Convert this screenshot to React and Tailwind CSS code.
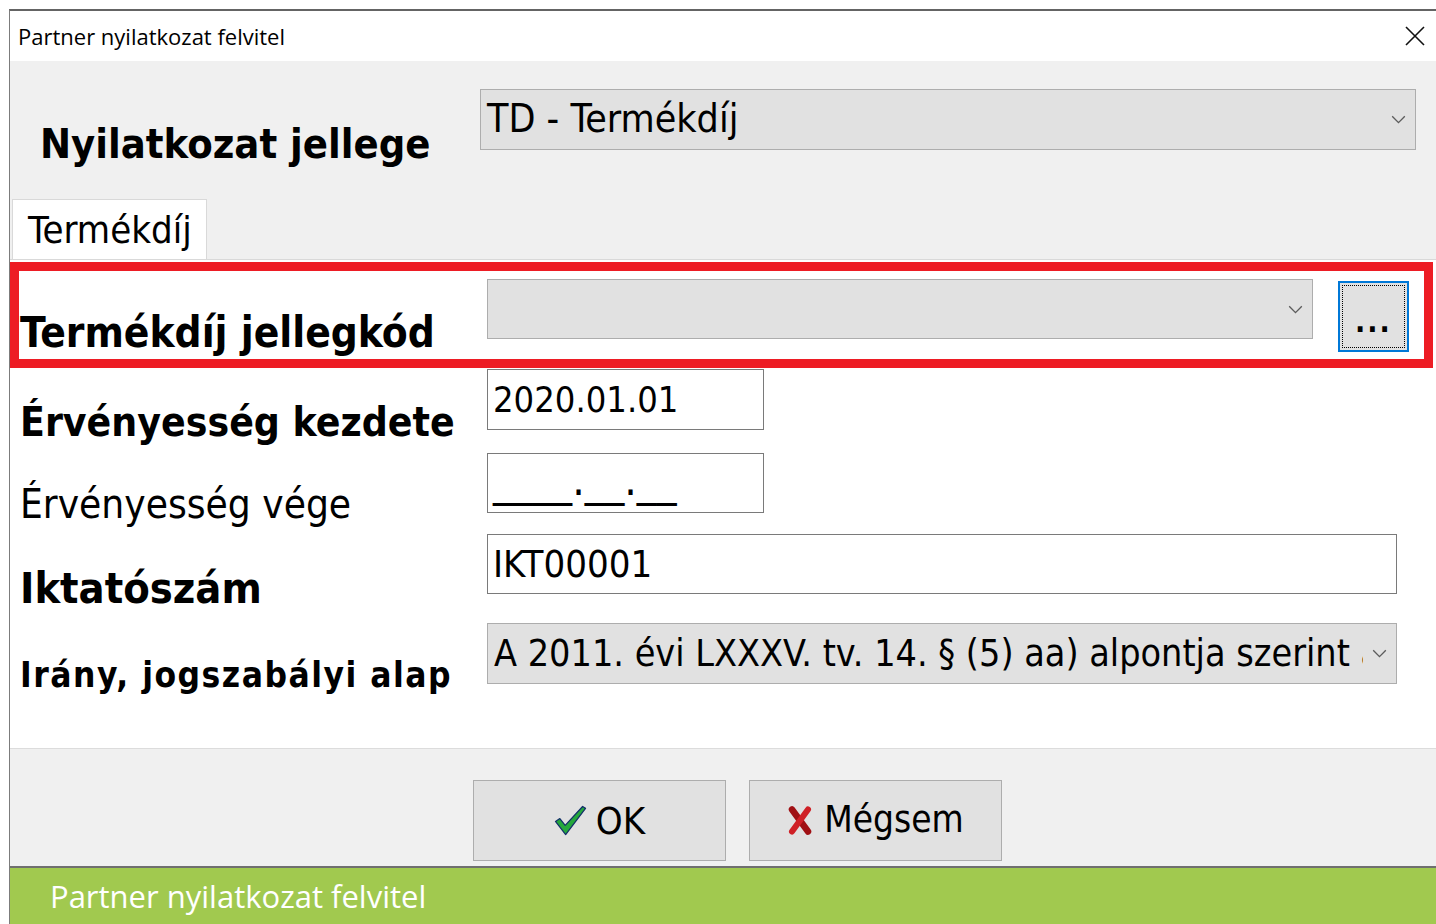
import React from "react";

// Tahoma-like face for the dialog body, Segoe-like for the caption
const DLG = "font-['DejaVu_Sans_Condensed','DejaVu_Sans',sans-serif]";
const CAPTION = "font-['Open_Sans','Noto_Sans',sans-serif]";

function Chevron({ className }) {
  return (
    <svg viewBox="0 0 16 10" className={className} fill="none" stroke="#5c5c5c" strokeWidth="1.5">
      <path d="M1 1.5 L8 8.5 L15 1.5" />
    </svg>
  );
}

function Combo({ value, className, textClass = "" }) {
  return (
    <div className={`flex items-center bg-[#e1e1e1] border border-[#adadad] ${className}`}>
      <span className={`flex-1 min-w-0 overflow-hidden whitespace-nowrap pl-[6px] leading-[1.3] text-black ${DLG} ${textClass}`}>
        {value}
      </span>
      <Chevron className="w-[15px] h-[9px] mx-[9px] shrink-0" />
    </div>
  );
}

function TextBox({ value, className, textClass = "" }) {
  return (
    <div className={`flex items-center bg-white border border-[#7a7a7a] ${className}`}>
      <span className={`pl-[5px] leading-none text-black whitespace-nowrap ${DLG} ${textClass}`}>{value}</span>
    </div>
  );
}

// label sits with its baseline a few px under the field's bottom edge
function Label({ children, bold = true, width = "w-[467px]", size = "text-[42px]", drop = "mb-[-17px]" }) {
  return (
    <div
      className={`${width} ${size} ${drop} shrink-0 leading-none text-black whitespace-nowrap ${DLG} ${
        bold ? "font-bold" : "font-normal"
      }`}
    >
      {children}
    </div>
  );
}

function CheckIcon() {
  return (
    <svg viewBox="0 0 34 32" className="w-[33px] h-[31px]">
      <path
        d="M1.5 17 L6 14 L11.5 21 L29.5 1.5 L32.5 3.5 L12 30.5 Z"
        fill="#25a83c"
        stroke="#14306a"
        strokeWidth="1.3"
        strokeLinejoin="round"
      />
    </svg>
  );
}

function CrossIcon() {
  return (
    <svg viewBox="0 0 26 29" className="w-[26px] h-[29px]">
      <path d="M5 3.5 L21 25.5" stroke="#a01014" strokeWidth="6.5" strokeLinecap="round" />
      <path d="M21 3.5 L5 25.5" stroke="#cf2026" strokeWidth="6" strokeLinecap="round" />
    </svg>
  );
}

function Button({ children, gap }) {
  return (
    <button className={`w-[253px] h-[81px] flex items-center justify-center ${gap} bg-[#e1e1e1] border border-[#adadad]`}>
      {children}
    </button>
  );
}

export default function App() {
  return (
    <div className="w-[1436px] h-[924px] bg-white flex flex-col pt-[9px] pl-[9px] overflow-hidden">
      <div className="flex-1 flex flex-col border-l border-[#7c7c7c] border-t-2 border-t-[#646464]">
        {/* caption bar */}
        <div className="h-[50px] bg-white flex items-center justify-between pl-[8px] pr-[11px]">
          <span className={`text-[22px] text-black ${CAPTION}`}>Partner nyilatkozat felvitel</span>
          <svg viewBox="0 0 20 20" className="w-[20px] h-[20px]" stroke="#111" strokeWidth="1.6">
            <path d="M1 1 L19 19 M19 1 L1 19" />
          </svg>
        </div>

        {/* declaration type */}
        <div className="h-[138px] bg-[#f0f0f0] pt-[28px] flex items-start">
          <div className="flex items-end">
            <Label width="w-[470px] pl-[30px]" size="text-[41.3px]" drop="mb-[-15px]">
              Nyilatkozat jellege
            </Label>
            <Combo value="TD - Termékdíj" className="w-[936px] h-[61px]" textClass="text-[39px]" />
          </div>
        </div>

        {/* tab strip */}
        <div className="h-[60px] bg-[#f0f0f0] flex items-end pl-[2px]">
          <div className="w-[195px] h-[60px] bg-white border-t border-l border-r border-[#d9d9d9] flex items-center pl-[15px]">
            <span className={`text-[38px] leading-none text-black ${DLG}`}>Termékdíj</span>
          </div>
        </div>

        {/* tab page */}
        <div className="h-[489px] bg-white border-t border-[#d9d9d9] flex flex-col">
          <div className="mt-[2px] w-[1423px] h-[106px] border-[9px] border-[#ed1c24] flex items-start pt-[8px]">
            <div className="flex items-end">
              <Label width="w-[468px] pl-[1px]" drop="mb-[-15px]">
                Termékdíj jellegkód
              </Label>
              <Combo value="" className="w-[826px] h-[60px]" textClass="text-[38px]" />
            </div>
            <div className="ml-[25px] mt-[2px] w-[71px] h-[71px] border-2 border-[#0078d7] bg-[#e1e1e1] p-[2px]">
              <div className="w-full h-full border border-dotted border-black flex items-end justify-center pb-[10px]">
                <span className={`text-[30px] font-bold leading-none tracking-[2px] text-black ${DLG}`}>...</span>
              </div>
            </div>
          </div>

          <div className="mt-[1px] flex items-end pl-[10px]">
            <Label size="text-[40.5px]" drop="mb-[-12px]">
              Érvényesség kezdete
            </Label>
            <TextBox value="2020.01.01" className="w-[277px] h-[61px]" textClass="text-[36px]" />
          </div>
          <div className="mt-[23px] flex items-end pl-[10px]">
            <Label bold={false} size="text-[40.2px]" drop="mb-[-11px]">
              Érvényesség vége
            </Label>
            <TextBox value="____.__.__" className="w-[277px] h-[60px]" textClass="text-[44px] pb-[6px]" />
          </div>
          <div className="mt-[21px] flex items-end pl-[10px]">
            <Label size="text-[43px]" drop="mb-[-16px]">
              Iktatószám
            </Label>
            <TextBox value="IKT00001" className="w-[910px] h-[60px]" textClass="text-[38px]" />
          </div>
          <div className="mt-[29px] flex items-end pl-[10px]">
            <Label size="text-[35px] tracking-[1.5px]" drop="mb-[-9px]">
              Irány, jogszabályi alap
            </Label>
            <Combo
              value="A 2011. évi LXXXV. tv. 14. § (5) aa) alpontja szerint a termékdíj"
              className="w-[910px] h-[61px]"
              textClass="text-[37.4px]"
            />
          </div>
        </div>

        {/* buttons */}
        <div className="h-[120px] bg-[#f0f0f0] border-t border-[#dcdcdc] border-b-2 border-b-[#6f6f6f] pt-[31px] pl-[463px] flex items-start gap-[23px]">
          <Button gap="gap-[9px]">
            <CheckIcon />
            <span className={`text-[38px] leading-none text-black ${DLG}`}>OK</span>
          </Button>
          <Button gap="gap-[11px]">
            <CrossIcon />
            <span className={`text-[36.7px] leading-none text-black ${DLG}`}>Mégsem</span>
          </Button>
        </div>

        {/* status strip */}
        <div className="flex-1 bg-[#a1c94f] flex items-center pl-[40px]">
          <span className={`text-[31px] text-white ${CAPTION}`}>Partner nyilatkozat felvitel</span>
        </div>
      </div>
    </div>
  );
}
